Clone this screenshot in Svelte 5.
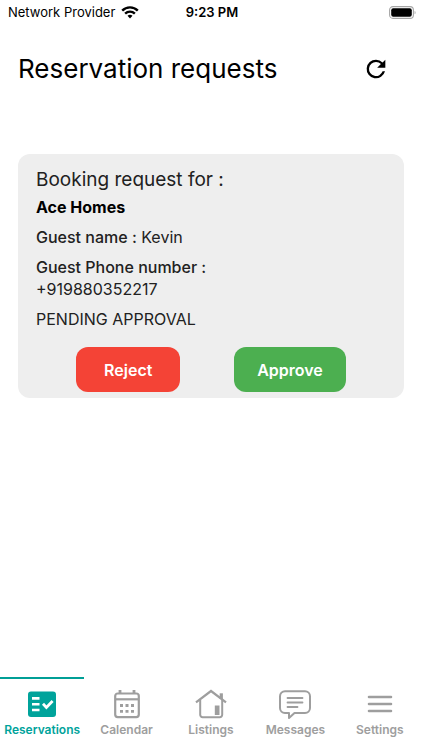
<script>
  let active = $state('reservations');

  const request = {
    listing: 'Ace Homes',
    guest: 'Kevin',
    phone: '+919880352217',
    status: 'PENDING APPROVAL'
  };

  const tabs = [
    { id: 'reservations', label: 'Reservations' },
    { id: 'calendar', label: 'Calendar' },
    { id: 'listings', label: 'Listings' },
    { id: 'messages', label: 'Messages' },
    { id: 'settings', label: 'Settings' }
  ];
</script>

<div class="screen">
  <div class="status-bar">
    <div class="carrier">
      <span>Network Provider</span>
      <svg width="18" height="13" viewBox="0 0 16 12" fill="none" stroke="#000" stroke-width="2.2">
        <path d="M.8 4.3C4.8.2 11.2.2 15.2 4.3" />
        <path d="M3.5 7.1c2.6-2.6 6.4-2.6 9 0" />
        <path d="M5.7 9.1a3.4 3.4 0 0 1 4.6 0L8 11.6z" fill="#000" stroke="none" />
      </svg>
    </div>
    <time>9:23 PM</time>
    <svg class="battery" width="27" height="13" viewBox="0 0 27 13">
      <rect x=".6" y=".6" width="23.8" height="11.8" rx="3.4" fill="none" stroke="#a6a6a6" stroke-width="1.1" />
      <rect x="2.2" y="2.2" width="20.6" height="8.6" rx="2" fill="#000" />
      <path d="M25.6 4.7c1.3.5 1.3 3.1 0 3.6z" fill="#a6a6a6" />
    </svg>
  </div>

  <header>
    <h1>Reservation requests</h1>
    <button class="refresh" aria-label="Refresh">
      <svg width="28" height="28" viewBox="0 0 24 24" fill="#000">
        <path d="M17.65 6.35A7.96 7.96 0 0 0 12 4a8 8 0 1 0 7.73 10h-2.08A6 6 0 1 1 12 6c1.66 0 3.14.69 4.22 1.78L13 11h7V4l-2.35 2.35z" />
      </svg>
    </button>
  </header>

  <main>
    <article class="card">
      <h2>Booking request for :</h2>
      <p class="listing">{request.listing}</p>
      <p><span class="key">Guest name :</span> {request.guest}</p>
      <p><span class="key">Guest Phone number :</span><br />{request.phone}</p>
      <p>{request.status}</p>
      <div class="actions">
        <button class="action reject">Reject</button>
        <button class="action approve">Approve</button>
      </div>
    </article>
  </main>

  <nav>
    {#each tabs as tab}
      <button class="tab" class:active={active === tab.id} onclick={() => (active = tab.id)}>
        <svg width="34" height="34" viewBox="0 0 34 34" fill="none" stroke="currentColor" stroke-width="2">
          {#if tab.id === 'reservations'}
            <rect x="3" y="4.5" width="28" height="25.5" rx="3" fill="currentColor" stroke="none" />
            <path d="M7 11.4h7.5M7 17.200h7.5M7 23h7.5" stroke="#fff" stroke-width="2.6" />
            <path d="m18 16.800 3.400 3.600 6.200-6.400" stroke="#fff" stroke-width="2.8" />
          {:else if tab.id === 'calendar'}
            <rect x="5.200" y="6.500" width="23.600" height="23.600" rx="2.500" stroke-width="2.200" />
            <path d="M5 12.300h24" stroke-width="2.200" />
            <path d="M10 3v4M24 3v4" stroke-width="2.800" />
            <path d="M10 18.500h3m2.500 0h3m2.500 0h3M10 24.300h3m2.500 0h3m2.500 0h3" stroke-width="2.800" />
          {:else if tab.id === 'listings'}
            <path d="M2 15.300 17 4l15 11.300" stroke-width="2.200" />
            <path d="M6.200 13v14.800a2.400 2.400 0 0 0 2.400 2.400h17.200a2.400 2.400 0 0 0 2.400-2.400V13" />
            <path d="M27.300 12V6.300" stroke-width="3.200" />
            <path d="M20.800 18.500h4.700V28h-4.700z" fill="currentColor" stroke="none" />
          {:else if tab.id === 'messages'}
            <path d="M7 4.200h20a5 5 0 0 1 5 5V21a5 5 0 0 1-5 5H16.500l-5.500 5v-5H7a5 5 0 0 1-5-5V9.200a5 5 0 0 1 5-5z" stroke-linejoin="round" />
            <path d="M9.500 11h15M9.500 15.500h15M9.500 20h10" stroke-width="1.800" stroke-linecap="round" />
          {:else}
            <path d="M6 10h22M6 17h22M6 24h22" stroke-width="2.600" stroke-linecap="round" />
          {/if}
        </svg>
        <span>{tab.label}</span>
      </button>
    {/each}
  </nav>
</div>

<style>
  :global(body) {
    background-color: #ffffff;
  }

  .screen {
    display: flex;
    flex-direction: column;
    min-height: 100vh;
    font-family: Inter, "Liberation Sans", sans-serif;
    color: #000000;
  }

  button {
    font-family: inherit;
    border: none;
    padding: 0;
    cursor: pointer;
  }

  /* Status bar */
  .status-bar {
    display: grid;
    grid-template-columns: 1fr auto 1fr;
    align-items: center;
    height: 24px;
    padding: 0 6px 0 8px;
    font-size: 13px;
  }

  .carrier {
    display: flex;
    align-items: center;
    gap: 6px;
  }

  time {
    font-weight: 600;
  }

  .battery {
    justify-self: end;
  }

  /* Header */
  header {
    display: flex;
    align-items: center;
    justify-content: space-between;
    padding: 24px 32px 0 18px;
  }

  h1 {
    margin: 0;
    font-size: 26px;
    font-weight: 400;
    line-height: 42px;
  }

  .refresh {
    display: flex;
    background: none;
  }

  /* Booking card */
  main {
    flex: 1;
    padding: 64px 18px 24px;
  }

  .card {
    padding: 10px 18px 6px;
    border-radius: 12px;
    background-color: #eeeeee;
    color: #212121;
  }

  h2 {
    margin: 0;
    font-size: 19px;
    font-weight: 400;
    line-height: 32px;
  }

  p {
    margin: 0 0 8px;
    font-size: 16px;
    line-height: 22px;
  }

  .listing {
    color: #000000;
    font-weight: 700;
  }

  .key {
    font-weight: 500;
  }

  .actions {
    display: flex;
    justify-content: center;
    gap: 54px;
    padding-top: 9px;
  }

  .action {
    min-width: 104px;
    height: 45px;
    padding: 0 23px;
    border-radius: 12px;
    color: #ffffff;
    font-size: 16px;
    font-weight: 600;
  }

  .reject {
    background-color: #f44336;
  }

  .approve {
    background-color: #4caf50;
  }

  /* Bottom tabs */
  nav {
    display: grid;
    grid-template-columns: repeat(5, 1fr);
    height: 73px;
  }

  .tab {
    display: flex;
    flex-direction: column;
    align-items: center;
    gap: 1px;
    padding-top: 8px;
    border-top: 2px solid transparent;
    background: none;
    color: #9e9e9e;
    font-size: 12px;
    font-weight: 600;
    line-height: 16px;
  }

  .tab.active {
    border-top-color: #009f96;
    color: #00a39b;
  }
</style>
